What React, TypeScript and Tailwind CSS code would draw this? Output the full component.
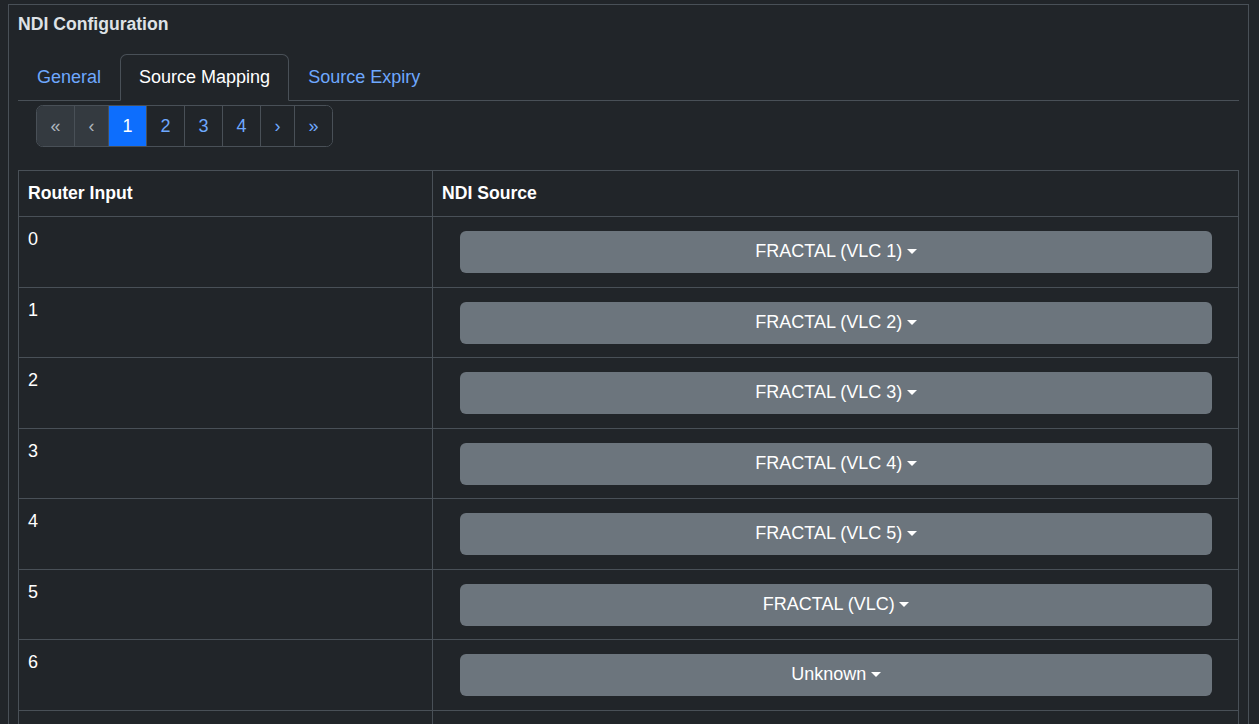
import React from "react";

const rows = [
  { n: "0", src: "FRACTAL (VLC 1)" },
  { n: "1", src: "FRACTAL (VLC 2)" },
  { n: "2", src: "FRACTAL (VLC 3)" },
  { n: "3", src: "FRACTAL (VLC 4)" },
  { n: "4", src: "FRACTAL (VLC 5)" },
  { n: "5", src: "FRACTAL (VLC)" },
  { n: "6", src: "Unknown" },
];

function Caret() {
  return (
    <span className="inline-block ml-[4.5px] w-0 h-0 border-t-[5.3px] border-t-white border-x-[5.3px] border-x-transparent" />
  );
}

export default function App() {
  const pages = [
    { label: "«", kind: "disabled" },
    { label: "‹", kind: "disabled" },
    { label: "1", kind: "active" },
    { label: "2", kind: "link" },
    { label: "3", kind: "link" },
    { label: "4", kind: "link" },
    { label: "›", kind: "link" },
    { label: "»", kind: "link" },
  ];
  return (
    <div className="h-screen overflow-hidden bg-[#212529] font-['Liberation_Sans',Arial,sans-serif] text-[18px] leading-[26.4px] text-[#dee2e6] pt-[4px] pl-[8px] pr-[10px]">
      <div className="border border-[#495057] px-[9px] pt-[6px] min-h-[800px]">
        <div className="font-bold text-[#dee2e6] text-[17.6px]">NDI Configuration</div>

        <div className="mt-[16.6px] flex border-b border-[#495057]">
          <div className="h-[47px] -mb-px flex items-center px-[18px] border border-transparent text-[#6ea8fe]">
            General
          </div>
          <div className="h-[47px] -mb-px flex items-center px-[18px] border border-[#495057] border-b-[#212529] rounded-t-[6.6px] bg-[#212529] text-white">
            Source Mapping
          </div>
          <div className="h-[47px] -mb-px flex items-center px-[18px] border border-transparent text-[#6ea8fe]">
            Source Expiry
          </div>
        </div>

        <div className="mt-[4px] ml-[18px] inline-flex border border-[#495057] rounded-[6.6px] overflow-hidden">
          {pages.map((p, i) => (
            <div
              key={i}
              className={
                "h-[40px] flex items-center px-[13.5px] " +
                (i > 0 ? "border-l border-[#495057] " : "") +
                (p.kind === "disabled"
                  ? "bg-[#343a40] text-[#adb5bd]"
                  : p.kind === "active"
                  ? "bg-[#0d6efd] text-white"
                  : "bg-[#212529] text-[#6ea8fe]")
              }
            >
              {p.label}
            </div>
          ))}
        </div>

        <div className="mt-[22.6px] border border-[#495057] text-white">
          <div className="flex h-[46px] border-b border-[#495057] font-bold text-[17.6px]">
            <div className="w-[414px] shrink-0 border-r border-[#495057] flex items-center px-[9px]">
              Router Input
            </div>
            <div className="flex-1 flex items-center px-[9px]">NDI Source</div>
          </div>
          {rows.map((r, i) => (
            <div
              key={r.n}
              className={
                "flex border-b border-[#495057] " +
                (i % 2 === 0 ? "h-[71px]" : "h-[70px]")
              }
            >
              <div className="w-[414px] shrink-0 border-r border-[#495057] px-[9px] pt-[9px]">
                {r.n}
              </div>
              <div className="flex-1 pl-[27px] pr-[26px] pt-[14px]">
                <div className="h-[42px] rounded-[6px] bg-[#6c757d] flex items-center justify-center text-white">
                  <span>{r.src}</span>
                  <Caret />
                </div>
              </div>
            </div>
          ))}
          <div className="flex h-[71px]">
            <div className="w-[414px] shrink-0 border-r border-[#495057]" />
            <div className="flex-1" />
          </div>
        </div>
      </div>
    </div>
  );
}
